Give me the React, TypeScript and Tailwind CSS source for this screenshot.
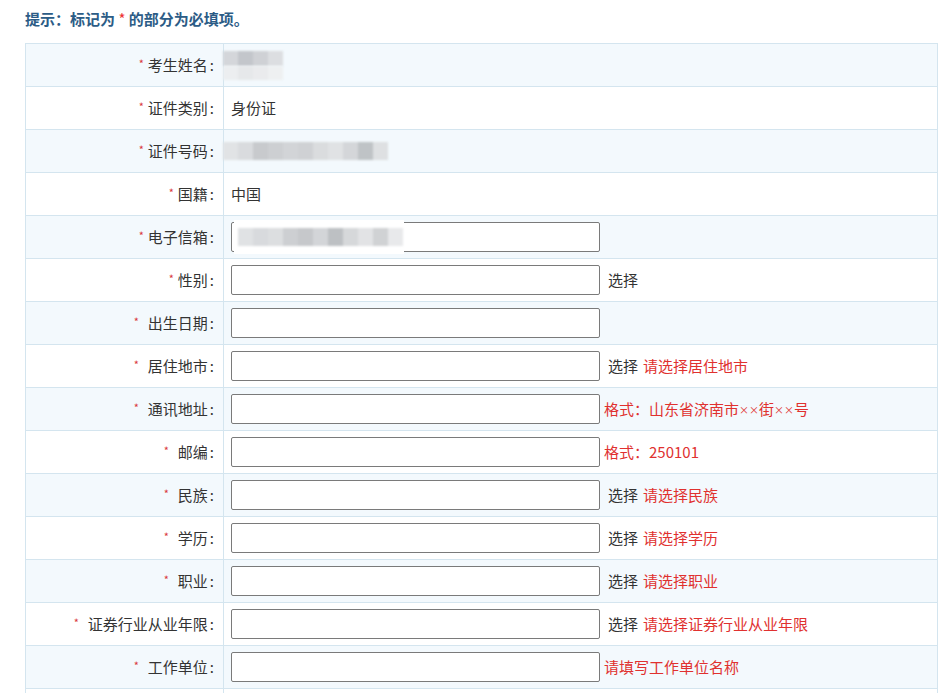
import React from "react";

type Row = {
	label: string;
	gap?: boolean;
	value?: React.ReactNode;
	input?: boolean;
	pick?: boolean;
	hint?: React.ReactNode;
};

const Blur = ({ shades, h = "h-[18px]" }: { shades: string[]; h?: string }) => (
	<div className={`flex ${h} blur-[1px]`}>
		{shades.map((c, i) => (
			<div key={i} className="w-[15px] h-full" style={{ background: c }} />
		))}
	</div>
);

const X = () => <span className="text-[10px] align-[1px]">××</span>;

const rows: Row[] = [
	{
		label: "考生姓名",
		value: (
			<div className="flex flex-col -ml-[8px]">
				<Blur shades={["#d4d6da", "#c3c6cb", "#cfd1d5", "#dcdee1"]} h="h-[15px]" />
				<Blur shades={["#eceef0", "#e6e8ea", "#eaebed", "#eef0f1"]} h="h-[14px]" />
			</div>
		),
	},
	{ label: "证件类别", value: "身份证" },
	{
		label: "证件号码",
		value: (
			<div className="-ml-[8px]">
				<Blur
					shades={["#e1e3e5", "#d9dbde", "#c8cacd", "#cdcfd2", "#d2d4d7", "#cfd1d4", "#dadcde", "#e0e2e4", "#d4d6d9", "#bfc3c6", "#dee0e2"]}
				/>
			</div>
		),
	},
	{ label: "国籍", value: "中国" },
	{ label: "电子信箱", input: true },
	{ label: "性别", input: true, pick: true },
	{ label: "出生日期", gap: true, input: true },
	{ label: "居住地市", gap: true, input: true, pick: true, hint: "请选择居住地市" },
	{
		label: "通讯地址",
		gap: true,
		input: true,
		hint: (
			<>
				格式：山东省济南市<X />街<X />号
			</>
		),
	},
	{ label: "邮编", gap: true, input: true, hint: "格式：250101" },
	{ label: "民族", gap: true, input: true, pick: true, hint: "请选择民族" },
	{ label: "学历", gap: true, input: true, pick: true, hint: "请选择学历" },
	{ label: "职业", gap: true, input: true, pick: true, hint: "请选择职业" },
	{ label: "证券行业从业年限", gap: true, input: true, pick: true, hint: "请选择证券行业从业年限" },
	{ label: "工作单位", gap: true, input: true, hint: "请填写工作单位名称" },
	{ label: "", input: false },
];

const App = () => {
	return (
		<div
			className="w-[951px] h-[693px] overflow-hidden bg-white text-[15px] text-[#333]"
			style={{ fontFamily: '"Noto Sans CJK SC", "Noto Sans", sans-serif' }}
		>
			<div className="pl-[25px] pt-[9px] h-[43px] font-bold text-[#2c5c86] leading-[20px]">
				提示：标记为 <span className="text-[#e33] font-normal">*</span> 的部分为必填项。
			</div>
			<div className="ml-[25px] w-[913px] border-t border-x border-[#d4e5ef]">
				{rows.map((row, i) => (
					<div
						key={i}
						className={`flex h-[43px] border-b border-[#d4e5ef] ${i % 2 === 0 ? "bg-[#f3f9fd]" : "bg-white"}`}
					>
						<div className="w-[198px] shrink-0 border-r border-[#d4e5ef] flex items-center justify-end pr-[9px]">
							{row.label && (
								<>
									<span className="text-[#d9363e] text-[11px] mr-[4px] -mt-[3px]">*</span>
									{row.gap && <span className="w-[5px]" />}
									<span>{row.label}</span>
									<span className="ml-[2px]">:</span>
								</>
							)}
						</div>
						<div className="flex items-center pl-[7px]">
							{row.value}
							{row.input && (
								<div className="relative w-[369px] h-[30px] border border-[#7a7a7a] rounded-[2px] bg-white">
									{i === 4 && (
										<div className="absolute left-[2px] -top-[3px] w-[170px] h-[34px] bg-white flex items-center px-[4px]">
											<Blur
												shades={["#e0e2e4", "#d8dadd", "#dcdee0", "#cdcfd2", "#c6c8cb", "#d3d5d8", "#bdc0c3", "#d6d8da", "#e2e3e5", "#d0d2d4", "#e8e9eb"]}
											/>
										</div>
									)}
								</div>
							)}
							{row.pick && <span className="ml-[8px]">选择</span>}
							{row.hint && (
								<span className={`text-[#e0312f] ${row.pick ? "ml-[5px]" : "ml-[4px]"}`}>{row.hint}</span>
							)}
						</div>
					</div>
				))}
			</div>
		</div>
	);
};

export default App;
